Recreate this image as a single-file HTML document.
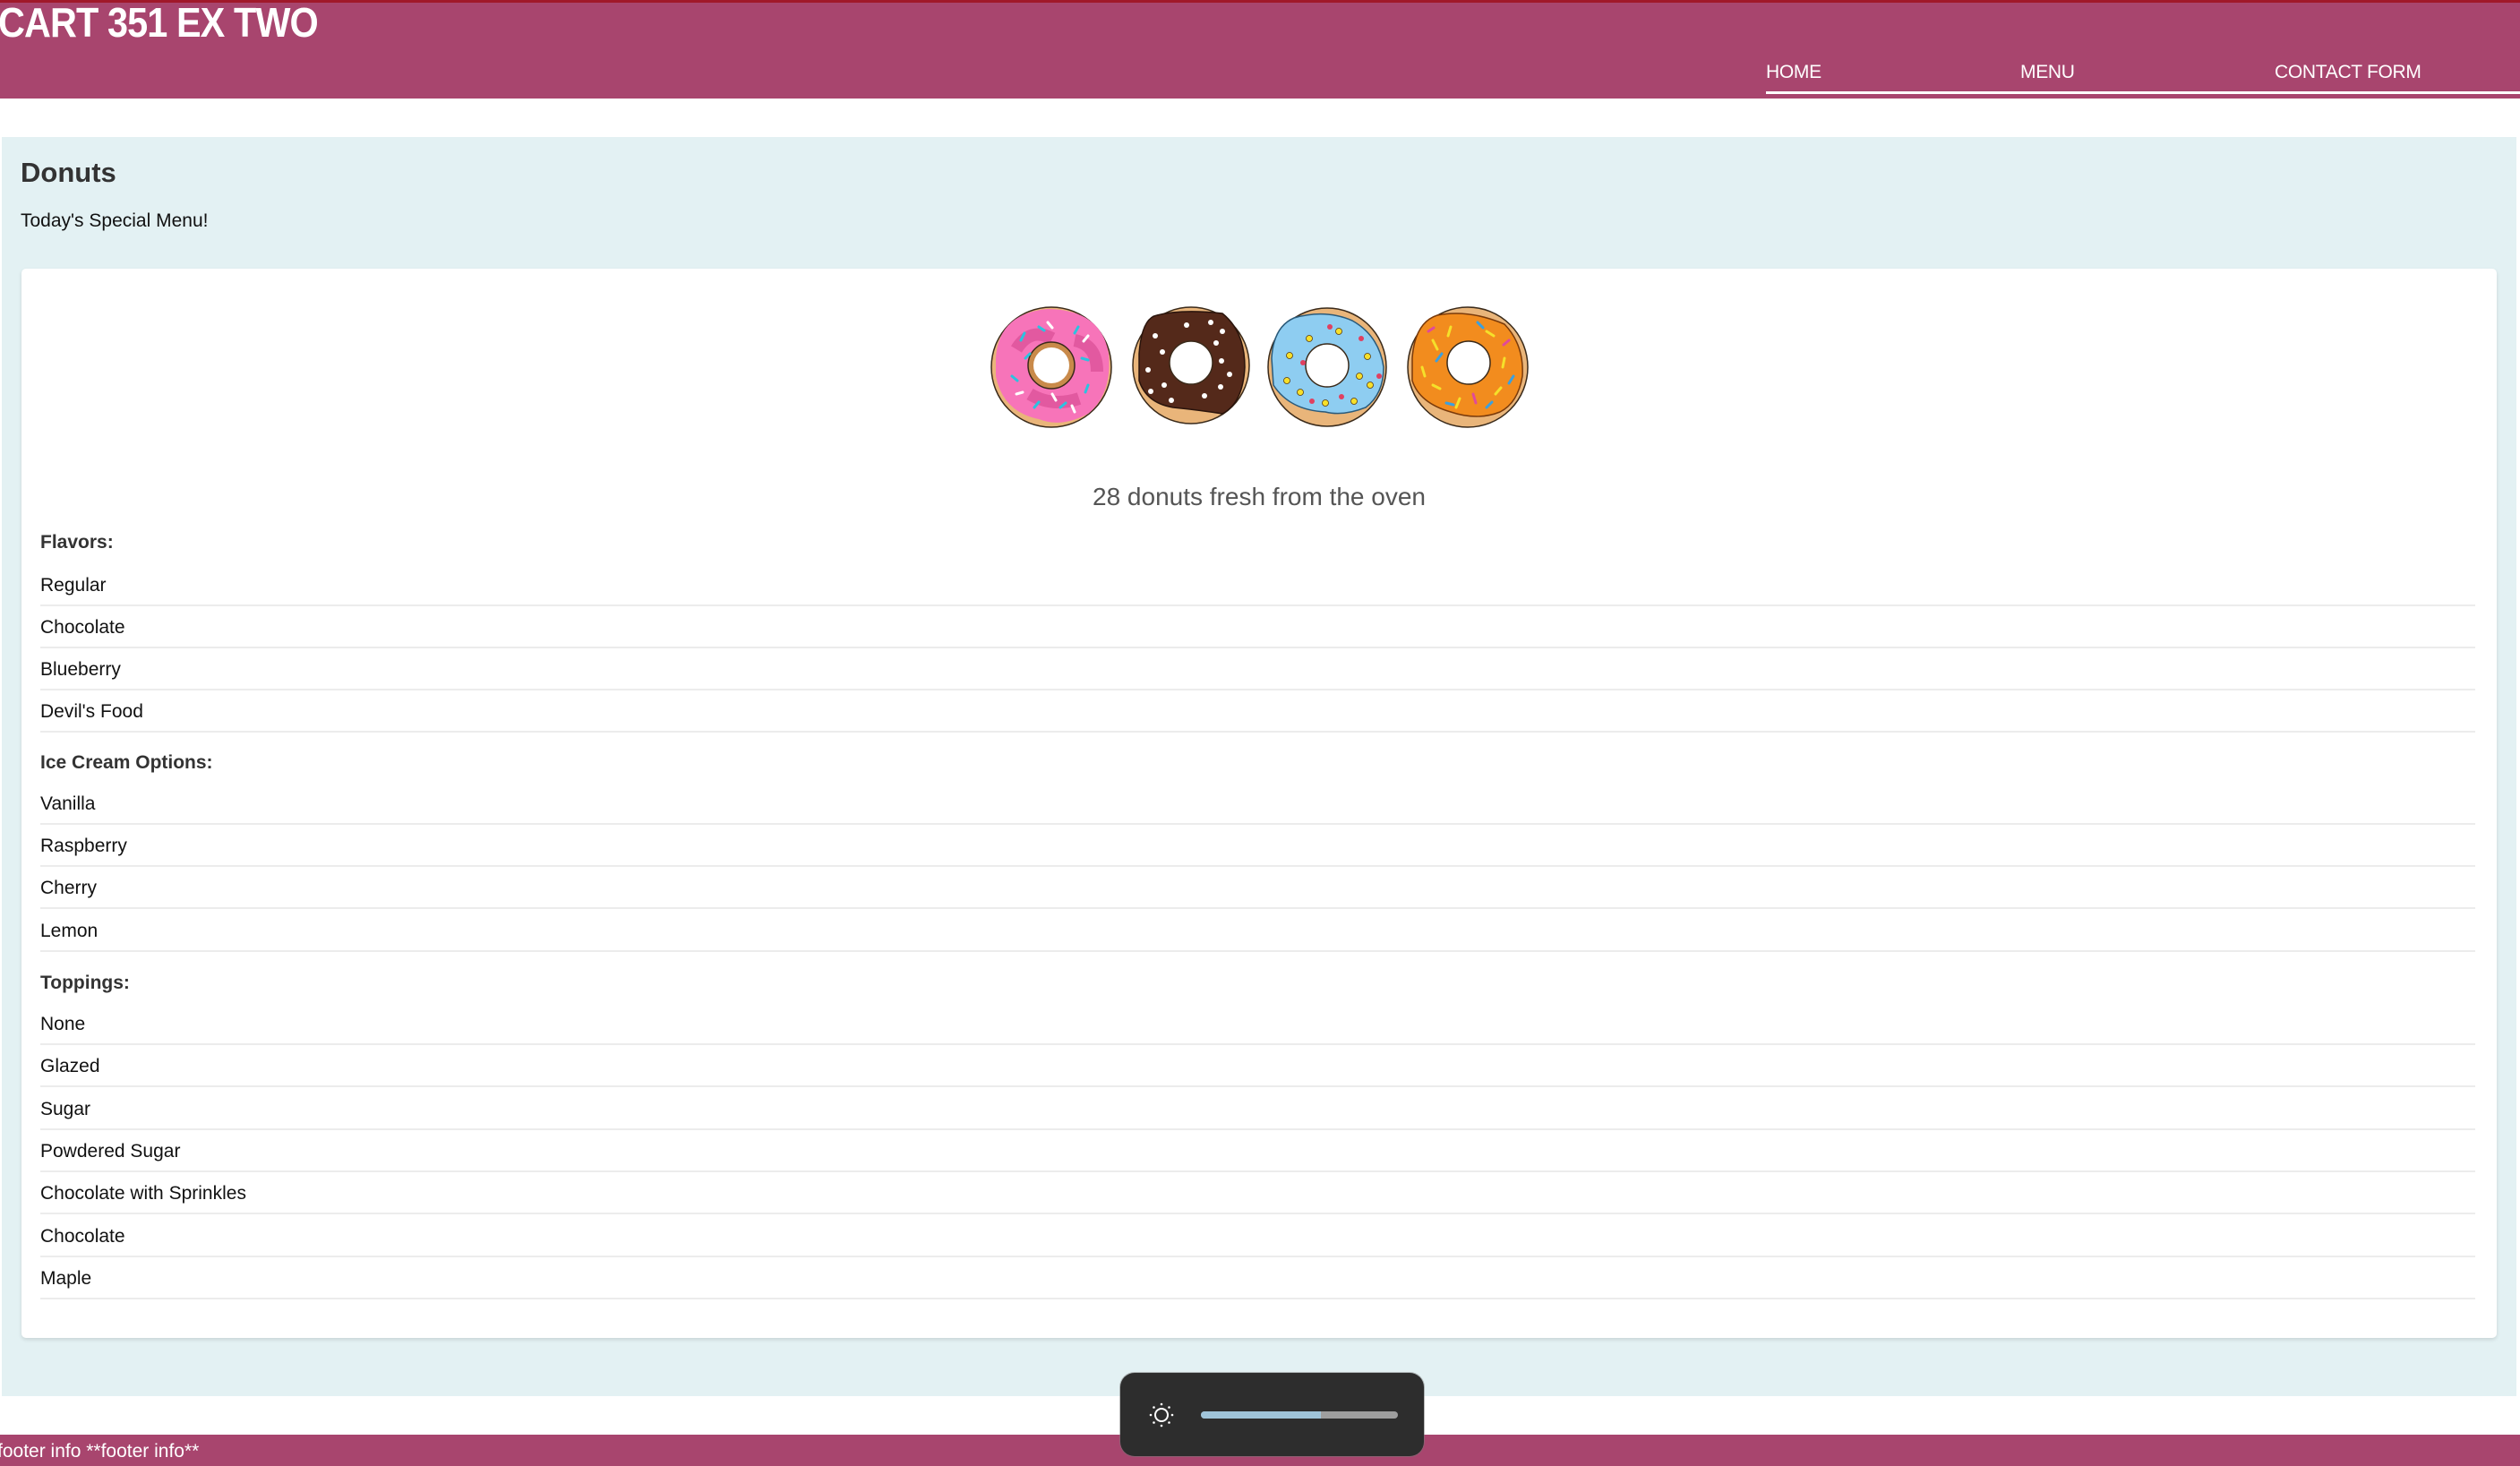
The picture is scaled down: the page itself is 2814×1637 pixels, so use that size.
<!DOCTYPE html>
<html><head><meta charset="utf-8">
<style>
*{margin:0;padding:0;box-sizing:border-box}
html,body{width:2814px;height:1637px;overflow:hidden;background:#fff;font-family:"Liberation Sans",sans-serif;position:relative}
.abs{position:absolute}
#hdr{left:0;top:0;width:2814px;height:110px;background:#a8456e;border-top:3px solid #a0182a}
#title{left:-2px;top:-2px;color:#fff;font-weight:bold;font-size:46px;letter-spacing:-1px;transform:scaleX(0.9);transform-origin:0 0;white-space:nowrap}
.nav{top:69px;color:#fff;font-size:21px;letter-spacing:-0.3px;white-space:nowrap}
#uline{left:1972px;top:102px;width:842px;height:3px;background:#fff}
#panel{left:2px;top:153px;width:2808px;height:1406px;background:#e3f1f3}
#card{left:24px;top:300px;width:2764px;height:1194px;background:#fff;border-radius:5px;box-shadow:0 2px 4px rgba(0,0,0,0.12)}
.row{left:45px;width:2719px;height:47px;line-height:48px;font-size:21px;color:#111;border-bottom:2px solid #ececec}
.hd{left:45px;font-size:21px;font-weight:bold;color:#333;line-height:32px}
#footer{left:0;top:1602px;width:2814px;height:35px;background:#a8456e}
#ftext{left:-3px;top:1603px;color:#fff;font-size:21px;line-height:35px;white-space:nowrap}
#osd{left:1251px;top:1533px;width:339px;height:93px;background:#2d2d2d;border-radius:16px;box-shadow:0 0 0 1px rgba(120,120,120,0.5)}
</style></head><body>
<div id="hdr" class="abs"></div>
<div id="title" class="abs">CART 351 EX TWO</div>
<div class="abs nav" style="left:1972px">HOME</div>
<div class="abs nav" style="left:2256px">MENU</div>
<div class="abs nav" style="left:2540px">CONTACT FORM</div>
<div id="uline" class="abs"></div>

<div id="panel" class="abs"></div>
<div class="abs" style="left:23px;top:175px;font-size:31px;font-weight:bold;color:#333">Donuts</div>
<div class="abs" style="left:23px;top:235px;font-size:21px;color:#111">Today's Special Menu!</div>
<div id="card" class="abs"></div>

<svg class="abs" style="left:1100px;top:335px" width="620" height="150" viewBox="1100 335 620 150">
 <g stroke="#3a2a1a" stroke-width="1.5">
  <ellipse cx="1174" cy="410" rx="67" ry="67" fill="#e9b57a"/>
  <path d="M1112 400 Q1115 350 1170 345 Q1230 346 1238 395 Q1242 440 1215 462 Q1185 478 1160 468 Q1120 460 1112 420 Z" fill="#f774b9" stroke="none"/>
  <path d="M1135 390 Q1150 365 1175 378 M1200 380 Q1225 385 1225 415 M1150 440 Q1175 455 1205 445" stroke="#d4478f" stroke-width="14" fill="none" opacity="0.6"/>
  <circle cx="1174" cy="408" r="26" fill="#c98a4a"/>
  <circle cx="1174" cy="408" r="20" fill="#fff" stroke="none"/>
  <ellipse cx="1330" cy="408" rx="65" ry="65" fill="#e9b57a"/>
  <path d="M1272 395 Q1275 355 1292 352 Q1320 345 1365 350 Q1390 370 1390 410 Q1388 450 1365 462 Q1340 458 1310 455 Q1280 450 1272 425 Z" fill="#54291a" stroke="#2a140c"/>
  <circle cx="1330" cy="405" r="24" fill="#fff"/>
  <ellipse cx="1482" cy="410" rx="66" ry="66" fill="#e9b57a"/>
  <path d="M1420 400 Q1422 365 1445 355 Q1480 345 1510 358 Q1540 375 1545 410 Q1545 440 1525 455 Q1500 465 1480 460 Q1440 458 1422 430 Z" fill="#8ecdf1" stroke="#2a5a7a"/>
  <circle cx="1482" cy="408" r="24" fill="#fff"/>
  <ellipse cx="1639" cy="410" rx="67" ry="67" fill="#e9b57a"/>
  <path d="M1577 400 Q1580 360 1605 352 Q1640 345 1680 362 Q1702 385 1700 420 Q1695 450 1675 460 Q1650 470 1620 460 Q1585 450 1577 425 Z" fill="#f28c1e" stroke="#7a3a0a"/>
  <circle cx="1640" cy="405" r="24" fill="#fff"/>
 </g>
 <g stroke-width="3" stroke-linecap="round">
  <path d="M1140 380l4 -8M1160 365l6 4M1200 372l4 -7M1130 420l6 5M1215 430l-3 8M1155 455l5 -6M1190 450l-6 5M1208 400l7 2M1150 395l-5 5" stroke="#2bc3e0"/>
  <path d="M1170 360l5 6M1215 375l-5 6M1135 440l7 -2M1200 460l-3 -7M1175 440l4 7" stroke="#fff"/>
  <path d="M1600 380l5 10M1620 365l-3 10M1660 370l8 5M1680 400l-2 10M1600 430l8 4M1630 445l-4 10M1670 440l6 -7M1588 410l3 10" stroke="#f5e02a"/>
  <path d="M1610 395l-6 8M1650 360l6 6M1690 420l-5 8M1615 450l8 2M1660 455l6 -6" stroke="#3aa0e0"/>
  <path d="M1595 370l6 -4M1645 440l3 10M1685 380l-6 5" stroke="#e04a9a"/>
 </g>
 <g fill="#fff">
  <circle cx="1290" cy="375" r="3"/><circle cx="1325" cy="363" r="3"/><circle cx="1352" cy="360" r="3"/><circle cx="1365" cy="370" r="3"/><circle cx="1298" cy="393" r="3"/><circle cx="1282" cy="413" r="3"/><circle cx="1300" cy="430" r="3"/><circle cx="1285" cy="437" r="3"/><circle cx="1308" cy="447" r="3"/><circle cx="1345" cy="442" r="3"/><circle cx="1363" cy="432" r="3"/><circle cx="1373" cy="418" r="3"/><circle cx="1364" cy="403" r="3"/><circle cx="1358" cy="383" r="3"/>
 </g>
 <g fill="#f7e02a" stroke="#5a3a0a" stroke-width="0.8">
  <circle cx="1440" cy="397" r="3.5"/><circle cx="1462" cy="378" r="3.5"/><circle cx="1495" cy="370" r="3.5"/><circle cx="1527" cy="398" r="3.5"/><circle cx="1437" cy="425" r="3.5"/><circle cx="1452" cy="438" r="3.5"/><circle cx="1480" cy="450" r="3.5"/><circle cx="1512" cy="448" r="3.5"/><circle cx="1530" cy="430" r="3.5"/><circle cx="1518" cy="420" r="3.5"/>
 </g>
 <g fill="#e04060">
  <circle cx="1485" cy="365" r="3"/><circle cx="1520" cy="378" r="3"/><circle cx="1455" cy="405" r="3"/><circle cx="1540" cy="420" r="3"/><circle cx="1465" cy="448" r="3"/><circle cx="1498" cy="443" r="3"/>
 </g>
</svg>

<div class="abs" style="left:0;width:2812px;top:539px;text-align:center;font-size:28px;color:#555">28 donuts fresh from the oven</div>

<div class="abs hd" style="top:590px">Flavors:</div>
<div class="abs row" style="top:630px">Regular</div>
<div class="abs row" style="top:677px">Chocolate</div>
<div class="abs row" style="top:724px">Blueberry</div>
<div class="abs row" style="top:771px">Devil's Food</div>
<div class="abs hd" style="top:836px">Ice Cream Options:</div>
<div class="abs row" style="top:874px">Vanilla</div>
<div class="abs row" style="top:921px">Raspberry</div>
<div class="abs row" style="top:968px">Cherry</div>
<div class="abs row" style="top:1016px">Lemon</div>
<div class="abs hd" style="top:1082px">Toppings:</div>
<div class="abs row" style="top:1120px">None</div>
<div class="abs row" style="top:1167px">Glazed</div>
<div class="abs row" style="top:1215px">Sugar</div>
<div class="abs row" style="top:1262px">Powdered Sugar</div>
<div class="abs row" style="top:1309px">Chocolate with Sprinkles</div>
<div class="abs row" style="top:1357px">Chocolate</div>
<div class="abs row" style="top:1404px">Maple</div>

<div id="footer" class="abs"></div>
<div id="ftext" class="abs">footer info **footer info**</div>

<div id="osd" class="abs"></div>
<svg class="abs" style="left:1280px;top:1563px" width="34" height="34" viewBox="0 0 34 34">
 <circle cx="17" cy="17" r="7" fill="none" stroke="#fff" stroke-width="2"/>
 <g fill="#fff"><circle cx="17" cy="5" r="1.3"/><circle cx="17" cy="29" r="1.3"/><circle cx="5" cy="17" r="1.3"/><circle cx="29" cy="17" r="1.3"/><circle cx="8.5" cy="8.5" r="1.3"/><circle cx="25.5" cy="8.5" r="1.3"/><circle cx="8.5" cy="25.5" r="1.3"/><circle cx="25.5" cy="25.5" r="1.3"/></g>
</svg>
<div class="abs" style="left:1341px;top:1576px;width:220px;height:8px;border-radius:4px;background:#9e9e9e"></div>
<div class="abs" style="left:1341px;top:1576px;width:134px;height:8px;border-radius:4px 0 0 4px;background:#a0c4d9"></div>
</body></html>
